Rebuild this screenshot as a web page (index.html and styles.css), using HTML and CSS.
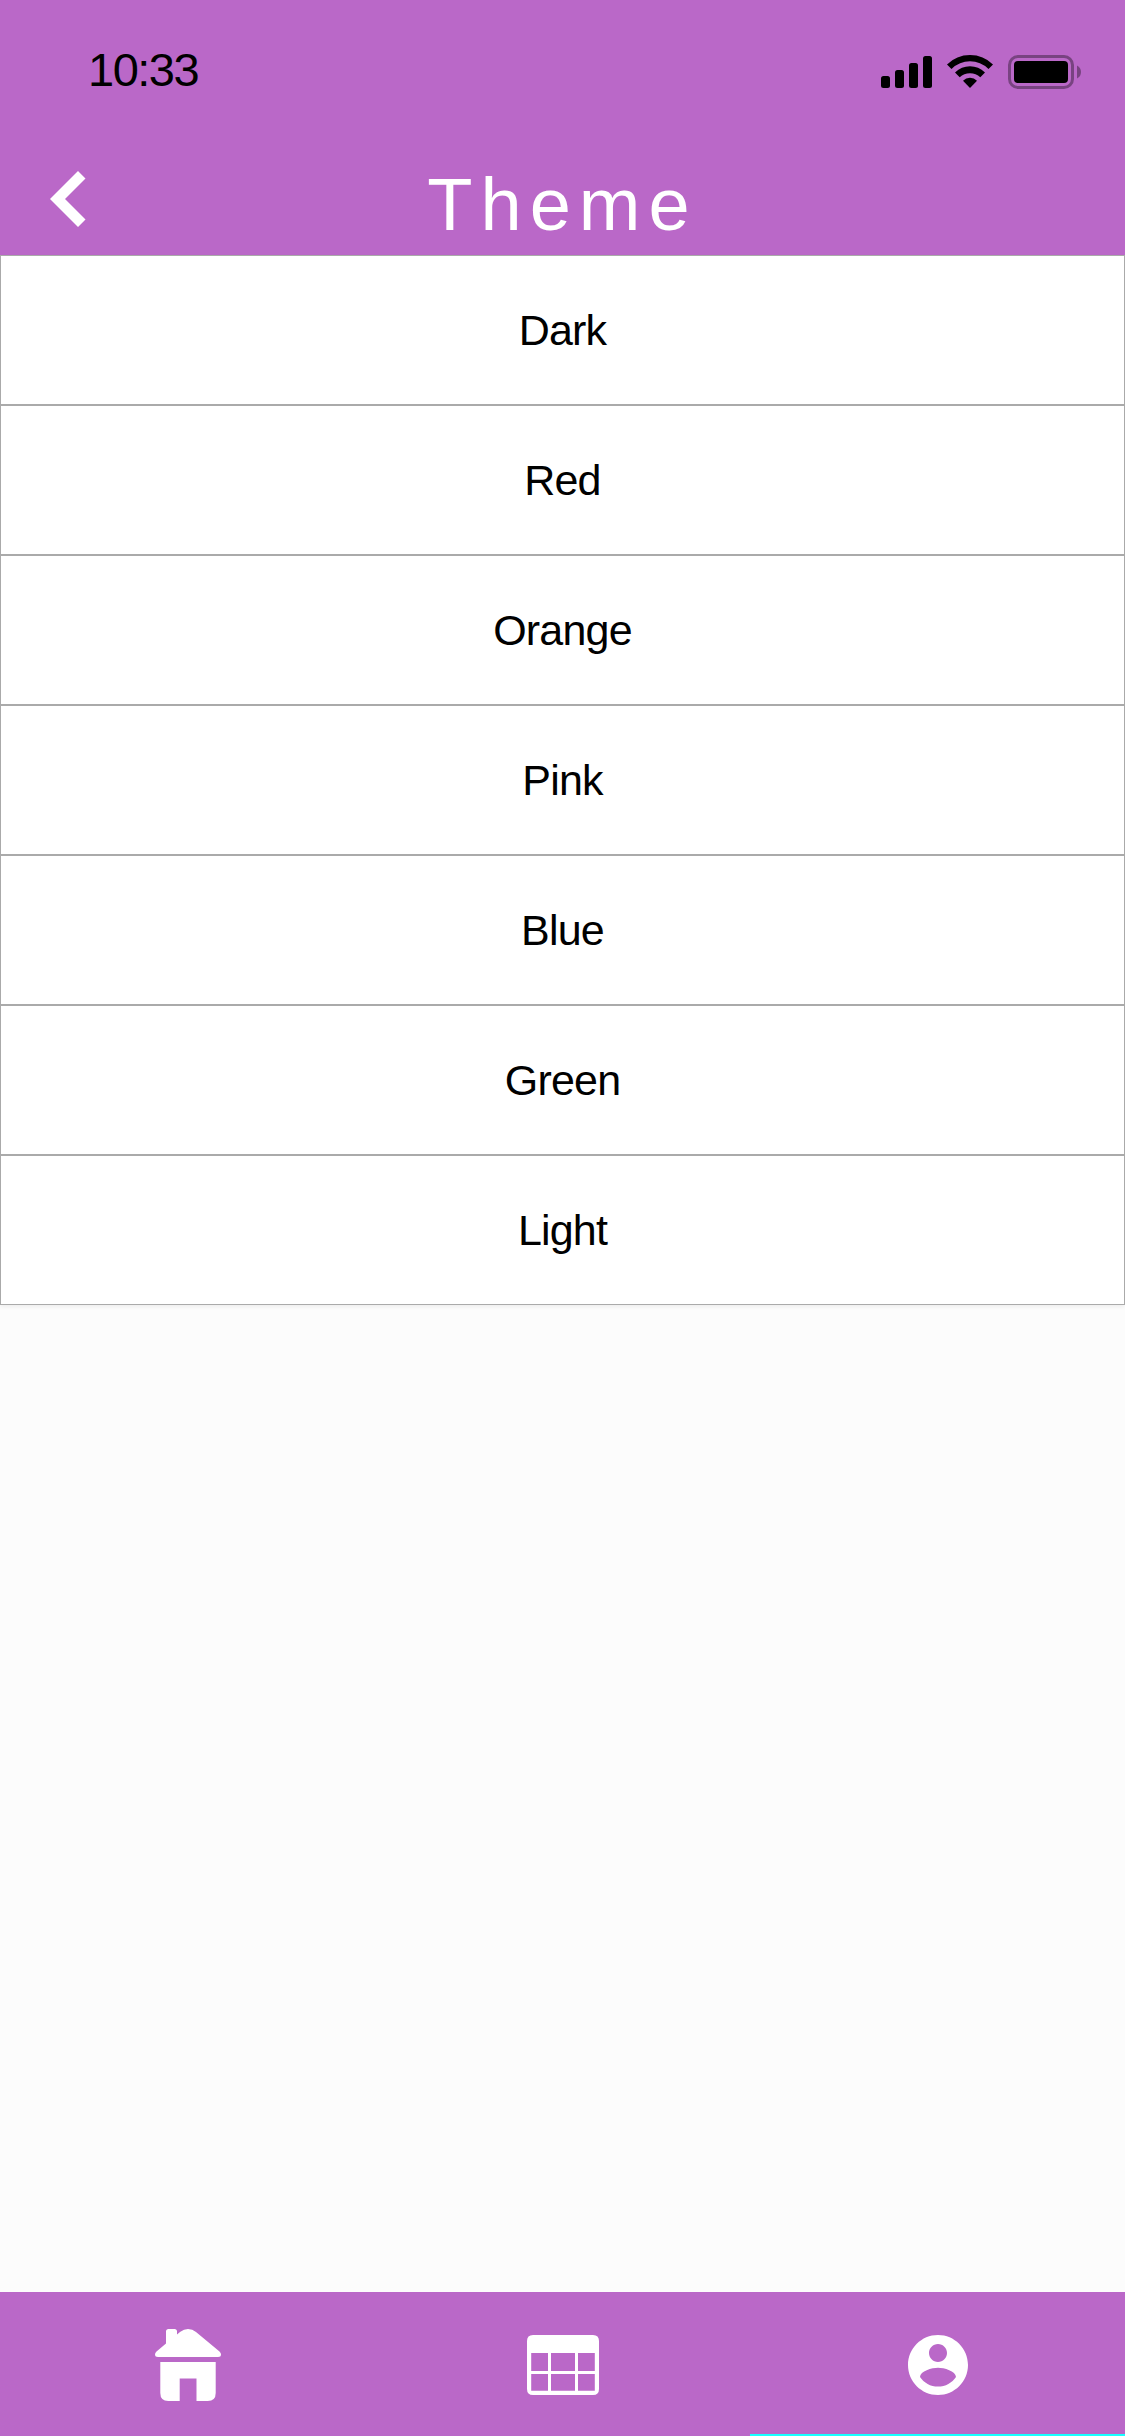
FILE: index.html
```html
<!DOCTYPE html>
<html lang="en">
<head>
<meta charset="utf-8">
<title>Theme</title>
<link rel="stylesheet" href="styles.css">
</head>
<body>
<div class="app">
  <header class="header">
    <div class="status">
      <span class="time">10:33</span>
      <svg class="indicators" width="204" height="40" viewBox="878 52 204 40">
        <rect x="881" y="76" width="9" height="12" rx="2.5"/>
        <rect x="895" y="70" width="9" height="18" rx="2.5"/>
        <rect x="909" y="63" width="9" height="25" rx="2.5"/>
        <rect x="923" y="56" width="9" height="32" rx="2.5"/>
        <path d="M947 64.500Q956.500 55 970 55T993 64.500L988.500 69Q980.500 61.300 970 61.300T951.500 69Z"/>
        <path d="M955 72.500Q961.500 66.300 970 66.300T985 72.500L980.300 77.200Q976 73.200 970 73.200T959.700 77.200Z"/>
        <path d="M963 80.700Q966 77.700 970 77.700T977 80.700L970 88Z"/>
        <g opacity=".35"><rect x="1009.500" y="56.500" width="63" height="31" rx="8.500" fill="none" stroke="#000" stroke-width="3"/>
        <path d="M1077 65.500Q1081 67.500 1081 72T1077 78.500Z"/></g>
        <rect x="1014" y="61" width="54" height="22" rx="4"/>
      </svg>
    </div>
    <div class="bar">
      <svg class="back" width="36" height="56" viewBox="49.500 171 36 56"><path d="M77.500 171L85 178.500L64.500 199L85 219.500L77.500 227L49.500 199Z"/></svg>
      <h1 class="title">Theme</h1>
    </div>
  </header>
  <main class="content">
    <ul class="themes">
      <li class="theme">Dark</li>
      <li class="theme">Red</li>
      <li class="theme">Orange</li>
      <li class="theme">Pink</li>
      <li class="theme">Blue</li>
      <li class="theme">Green</li>
      <li class="theme">Light</li>
    </ul>
  </main>
  <nav class="tabs">
    <a class="tab">
      <svg width="66" height="72" viewBox="155 2329 66 72">
        <path d="M155 2354.500Q155 2353 156.500 2351.500L166 2343.500V2331.500Q166 2329 168.500 2329H174.500Q177 2329 177 2331.500V2334.500L180 2332Q184 2329 188 2329Q192.500 2329 196 2332L219.500 2351.500Q221 2353 221 2354.500Q221 2357 218 2357H158Q155 2357 155 2354.500Z"/>
        <path d="M160.300 2362H215.700V2393Q215.700 2401 207.700 2401H196.500V2378.500H179.700V2401H168.300Q160.300 2401 160.300 2393Z"/>
      </svg>
    </a>
    <a class="tab">
      <svg width="72" height="60" viewBox="527 2335 72 60">
        <path fill-rule="evenodd" d="M533 2335H593Q599 2335 599 2341V2389Q599 2395 593 2395H533Q527 2395 527 2389V2341Q527 2335 533 2335ZM531.200 2353V2371H548V2353ZM551 2353V2371H575V2353ZM578 2353V2371H594.800V2353ZM531.200 2374V2390.700H548V2374ZM551 2374V2390.700H575V2374ZM578 2374V2390.700H594.800V2374Z"/>
      </svg>
    </a>
    <a class="tab tab-active">
      <svg width="72" height="72" viewBox="0 0 24 24"><path d="M12 2C6.480 2 2 6.480 2 12s4.480 10 10 10 10-4.480 10-10S17.520 2 12 2zm0 3c1.660 0 3 1.340 3 3s-1.340 3-3 3-3-1.340-3-3 1.340-3 3-3zm0 14.200c-2.500 0-4.710-1.280-6-3.220.030-1.990 4-3.080 6-3.080 1.990 0 5.970 1.090 6 3.080-1.290 1.940-3.500 3.220-6 3.220z"/></svg>
    </a>
  </nav>
</div>
</body>
</html>
```
FILE: styles.css
```css
* { box-sizing: border-box; }

body {
  margin: 0;
  font-family: "Liberation Sans", Arial, sans-serif;
  color: #000;
}

.app {
  display: flex;
  flex-direction: column;
  height: 2436px;
  background: #fcfcfc;
}

.header {
  height: 255px;
  background: #ba68c8;
}

.status {
  display: flex;
  justify-content: space-between;
  align-items: flex-start;
  height: 132px;
  padding: 52px 43px 0 88px;
}

.time {
  font-size: 47px;
  line-height: 35px;
  letter-spacing: -1.5px;
}

.indicators { display: block; }

.bar {
  display: grid;
  grid-template-columns: 1fr auto 1fr;
  padding-left: 49.5px;
}

.back {
  margin-top: 39px;
  fill: #fff;
}

.title {
  grid-column: 2;
  margin: 0 49.5px 0 0;
  font-size: 74px;
  font-weight: 400;
  line-height: 146px;
  height: 123px;
  letter-spacing: 8px;
  color: #fff;
}

.content { flex: 1; }

.themes {
  list-style: none;
  margin: 0;
  padding: 0;
  box-shadow: 0 2px 4px rgba(0, 0, 0, .06);
}

.theme {
  height: 150px;
  border: 1px solid #aaa;
  background: #fff;
  font-size: 43px;
  line-height: 148px;
  letter-spacing: -.8px;
  text-align: center;
}

.tabs {
  display: grid;
  grid-template-columns: repeat(3, 1fr);
  height: 144px;
  background: #ba68c8;
}

.tab {
  display: flex;
  align-items: center;
  justify-content: center;
  padding: 4px 0 0 1px;
  border-bottom: 2px solid transparent;
  fill: #fff;
}

.tab-active { border-bottom-color: #18ffff; }
```
